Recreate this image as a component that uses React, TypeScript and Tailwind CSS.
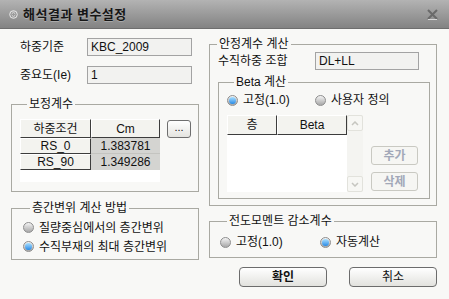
import React from "react";

const font = { fontFamily: '"Liberation Sans", "Noto Sans CJK KR", sans-serif' };

function Radio({ checked, label, className = "" }: { checked: boolean; label: string; className?: string }) {
  return (
    <div className={`flex items-center gap-[5px] ${className}`}>
      <span className="flex h-[11px] w-[11px] shrink-0 items-center justify-center rounded-full border border-[#8e8e8e] bg-gradient-to-b from-[#f4f4f4] to-[#a8a8a8]">
        {checked && (
          <span className="h-[7px] w-[7px] rounded-full bg-gradient-to-b from-[#a8e0ff] to-[#1f8ae6]" />
        )}
      </span>
      <span className="whitespace-nowrap text-[12px] leading-[14px] text-[#111]">{label}</span>
    </div>
  );
}

function Group({
  title,
  className = "",
  children,
}: {
  title: string;
  className?: string;
  children: React.ReactNode;
}) {
  return (
    <fieldset className={`border border-[#a9a9a2] ${className}`}>
      <legend className="ml-[7px] px-[2px] text-[12px] leading-[14px] text-[#111]">{title}</legend>
      {children}
    </fieldset>
  );
}

function HeadCell({ text, w, h }: { text: string; w: string; h: string }) {
  return (
    <div
      className={`${w} ${h} flex items-center justify-center border-t border-l border-r border-b border-t-white border-l-white border-r-[#3c3c3c] border-b-[#3c3c3c] bg-[#f3f3ef] text-[12px] leading-none text-[#111]`}
    >
      {text}
    </div>
  );
}

function Field({ label, value, labelW, inputW }: { label: string; value: string; labelW: string; inputW: string }) {
  return (
    <div className="flex h-[18px] items-center">
      <span className={`${labelW} shrink-0 text-[12px] leading-[14px] text-[#111]`}>{label}</span>
      <div className={`${inputW} flex h-[18px] items-center border border-[#a3a3a3] bg-[#f2f2f0] pl-[3px] text-[12px] leading-none text-[#111]`}>
        {value}
      </div>
    </div>
  );
}

export default function App() {
  return (
    <div className="flex h-[299px] w-[449px] flex-col overflow-hidden bg-[#f8f8f6]" style={font}>
      {/* title bar */}
      <div className="flex h-[29px] shrink-0 items-center border-b border-[#6e6e6e] bg-gradient-to-b from-[#b3b3b3] to-[#838383] pl-[9px] pr-[10px]">
        <svg width="9" height="9" viewBox="0 0 9 9" className="shrink-0">
          <circle cx="4.5" cy="4.5" r="3.8" fill="none" stroke="#e8e8e8" strokeWidth="1" />
          <path d="M2.8 3.8 L4.5 2.2 L6.2 3.8 M2.8 5.2 L4.5 6.8 L6.2 5.2" fill="none" stroke="#e8e8e8" strokeWidth="0.9" />
        </svg>
        <span className="ml-[5px] text-[13px] font-bold leading-none tracking-[0.5px] text-[#161616] [text-shadow:0_1px_0_rgba(255,255,255,0.25)]">
          해석결과 변수설정
        </span>
        <svg width="11" height="11" viewBox="0 0 11 11" className="ml-auto mr-[1px] shrink-0">
          <path d="M1 1 L10 10 M10 1 L1 10" stroke="#6a6a6a" strokeWidth="2" />
          <path d="M1 10.5 L10 10.5" stroke="#d6d6d6" strokeWidth="1" />
        </svg>
      </div>

      {/* body */}
      <div className="flex pl-[11px]">
        {/* left column */}
        <div className="flex w-[188px] flex-col pt-[9px]">
          <div className="pl-[9px]">
            <Field label="하중기준" value="KBC_2009" labelW="w-[67px]" inputW="w-[105px]" />
            <div className="mt-[10px]">
              <Field label="중요도(Ie)" value="1" labelW="w-[67px]" inputW="w-[105px]" />
            </div>
          </div>

          <Group title="보정계수" className="mt-[13px] w-[188px] pb-[9px] pl-[8px] pt-[8px]">
            <div className="flex items-start">
              <div className="flex h-[63px] w-[140px] flex-col bg-white">
                <div className="flex">
                  <HeadCell text="하중조건" w="w-[71px]" h="h-[19px]" />
                  <HeadCell text="Cm" w="w-[69px]" h="h-[19px]" />
                </div>
                <div className="flex">
                  <HeadCell text="RS_0" w="w-[71px]" h="h-[16px]" />
                  <div className="flex h-[16px] w-[69px] items-center justify-center border-b border-[#c4c4c0] bg-[#d4d4d1] text-[12px] leading-none text-[#111]">
                    1.383781
                  </div>
                </div>
                <div className="flex">
                  <HeadCell text="RS_90" w="w-[71px]" h="h-[16px]" />
                  <div className="flex h-[16px] w-[69px] items-center justify-center bg-[#d4d4d1] text-[12px] leading-none text-[#111]">
                    1.349286
                  </div>
                </div>
              </div>
              <button
                type="button"
                className="ml-[7px] mt-[1px] flex h-[18px] w-[24px] items-start justify-center rounded-[3px] border border-[#6e6e6e] bg-gradient-to-b from-white to-[#e4e4e0] text-[11px] leading-[12px] text-[#111]"
              >
                ...
              </button>
            </div>
          </Group>

          <Group title="층간변위 계산 방법" className="mt-[9px] w-[188px] pb-[3px] pl-[11px] pt-[3px]">
            <Radio checked={false} label="질량중심에서의 층간변위" className="h-[19px]" />
            <Radio checked={true} label="수직부재의 최대 층간변위" className="h-[19px]" />
          </Group>
        </div>

        {/* right column */}
        <div className="ml-[10px] flex w-[228px] flex-col pt-[8px]">
          <Group title="안정계수 계산" className="w-[228px] pb-[6px] pt-[1px]">
            <div className="pl-[8px]">
              <Field label="수직하중 조합" value="DL+LL" labelW="w-[97px]" inputW="w-[104px]" />
            </div>
            <Group title="Beta 계산" className="ml-[8px] mt-[5px] w-[212px] pb-[6px] pl-[8px] pt-[3px]">
              <div className="flex h-[16px] items-center">
                <Radio checked={true} label="고정(1.0)" className="w-[88px]" />
                <Radio checked={false} label="사용자 정의" />
              </div>
              <div className="mt-[7px] flex items-end">
                <div className="flex h-[77px] w-[136px] bg-white">
                  <div className="flex flex-col">
                    <div className="flex">
                      <HeadCell text="층" w="w-[50px]" h="h-[20px]" />
                      <HeadCell text="Beta" w="w-[70px]" h="h-[20px]" />
                    </div>
                  </div>
                  <div className="flex w-[16px] flex-col justify-between bg-[#f4f4f1]">
                    <div className="flex h-[16px] items-center justify-center rounded-[2px] border border-[#e2e2dc] bg-[#f7f7f4]">
                      <svg width="8" height="5" viewBox="0 0 8 5">
                        <path d="M1 4 L4 1 L7 4" fill="none" stroke="#c6c6c0" strokeWidth="1.5" />
                      </svg>
                    </div>
                    <div className="flex h-[16px] items-center justify-center rounded-[2px] border border-[#e2e2dc] bg-[#f7f7f4]">
                      <svg width="8" height="5" viewBox="0 0 8 5">
                        <path d="M1 1 L4 4 L7 1" fill="none" stroke="#c6c6c0" strokeWidth="1.5" />
                      </svg>
                    </div>
                  </div>
                </div>
                <div className="ml-[8px] flex flex-col gap-[7px] pb-[1px]">
                  <button
                    type="button"
                    className="flex h-[19px] w-[47px] items-center justify-center rounded-[3px] border border-[#c9c9c2] bg-[#f6f6f3] text-[12px] font-bold leading-none text-[#a2a8b8]"
                  >
                    추가
                  </button>
                  <button
                    type="button"
                    className="flex h-[19px] w-[47px] items-center justify-center rounded-[3px] border border-[#c9c9c2] bg-[#f6f6f3] text-[12px] font-bold leading-none text-[#a2a8b8]"
                  >
                    삭제
                  </button>
                </div>
              </div>
            </Group>
          </Group>

          <Group title="전도모멘트 감소계수" className="mt-[8px] w-[228px] pb-[7px] pl-[10px] pt-[6px]">
            <div className="flex h-[16px] items-center">
              <Radio checked={false} label="고정(1.0)" className="w-[100px]" />
              <Radio checked={true} label="자동계산" />
            </div>
          </Group>

          <div className="ml-[30px] mt-[9px] flex gap-[22px]">
            <button
              type="button"
              className="flex h-[20px] w-[88px] items-center justify-center rounded-[4px] border border-[#6c6c6c] bg-gradient-to-b from-white to-[#e2e2de] text-[12px] font-bold leading-none text-[#111]"
            >
              확인
            </button>
            <button
              type="button"
              className="flex h-[20px] w-[88px] items-center justify-center rounded-[4px] border border-[#6c6c6c] bg-gradient-to-b from-white to-[#e2e2de] text-[12px] leading-none text-[#111]"
            >
              취소
            </button>
          </div>
        </div>
      </div>
    </div>
  );
}
